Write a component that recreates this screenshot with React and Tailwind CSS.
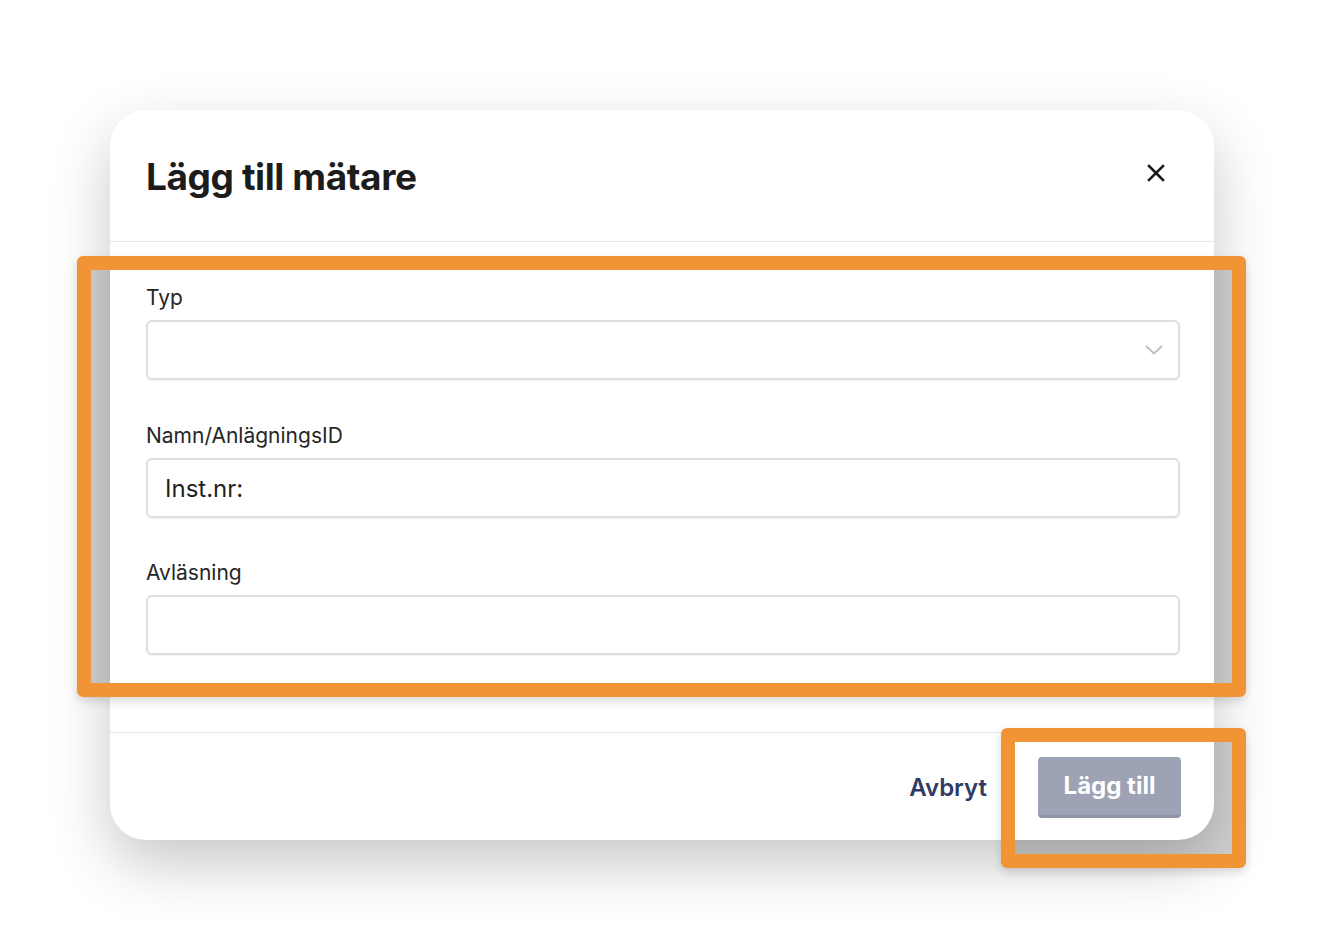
import React from 'react';

const fieldClass =
  'w-full h-[60px] rounded-[6px] border-2 border-[#dedede] bg-white px-[17px] text-[24px] text-[#1f1f1f] shadow-[0_1px_2px_rgba(0,0,0,0.06)] outline-none';

const Field = ({ label, children, className = '' }) => (
  <div className={className}>
    <label className="block text-[21px] leading-[28px] text-[#262626] mb-[8px]">{label}</label>
    {children}
  </div>
);

const App = () => {
  return (
    <div
      className="relative w-[1324px] h-[950px] bg-white overflow-hidden"
      style={{ fontFamily: 'Inter, "Noto Sans", sans-serif' }}
    >
      {/* Grey fill behind the highlight boxes */}
      <div className="absolute left-[91px] top-[270px] w-[1141px] h-[413px] bg-[#d2d2d2]" />
      <div className="absolute left-[1015px] top-[742px] w-[217px] h-[112px] bg-[#d2d2d2]" />

      <div className="relative pt-[110px] pl-[110px]">
        {/* Modal */}
        <div className="w-[1104px] h-[730px] bg-white rounded-[36px] shadow-[0_24px_60px_rgba(0,0,0,0.22)] flex flex-col">
          <div className="h-[132px] flex items-center justify-between pl-[36px] pr-[46px] border-b border-[#e6e6e6]">
            <h2 className="text-[37px] font-bold text-[#1c1c1c] tracking-[-0.4px] pt-[2px]">Lägg till mätare</h2>
            <button className="w-[24px] h-[24px] mb-[6px] flex items-center justify-center text-[#1c1c1c]">
              <svg width="18" height="18" viewBox="0 0 18 18" fill="none" stroke="currentColor" strokeWidth="2.6" strokeLinecap="square">
                <path d="M2 2L16 16M16 2L2 16" />
              </svg>
            </button>
          </div>

          <div className="flex-1 pl-[36px] pr-[34px] pt-[42px]">
            <Field label="Typ">
              <div className={`${fieldClass} flex items-center justify-end pr-[15px]`}>
                <svg width="18" height="10" viewBox="0 0 18 10" fill="none" stroke="#bdbdbd" strokeWidth="1.8">
                  <path d="M1 1L9 8.5L17 1" />
                </svg>
              </div>
            </Field>
            <Field label="Namn/AnlägningsID" className="mt-[42px]">
              <input className={fieldClass} defaultValue="Inst.nr:" />
            </Field>
            <Field label="Avläsning" className="mt-[41px]">
              <input className={fieldClass} defaultValue="" />
            </Field>
          </div>

          <div className="h-[108px] border-t border-[#e6e6e6] flex items-center justify-end gap-[51px] pr-[33px] pt-[2px]">
            <button className="text-[24px] font-semibold text-[#2f3b63]">Avbryt</button>
            <button className="w-[143px] h-[61px] rounded-[4px] bg-[#9da2b5] border-b-[3px] border-[#8e93a7] text-[24px] font-bold text-white">
              Lägg till
            </button>
          </div>
        </div>
      </div>

      {/* Highlight boxes */}
      <div className="absolute left-[77px] top-[256px] w-[1169px] h-[441px] border-[14px] border-[#f19435] rounded-[6px] shadow-[0_4px_10px_rgba(0,0,0,0.15)]" />
      <div className="absolute left-[1001px] top-[728px] w-[245px] h-[140px] border-[14px] border-[#f19435] rounded-[6px] shadow-[0_4px_10px_rgba(0,0,0,0.15)]" />
    </div>
  );
};

export default App;
